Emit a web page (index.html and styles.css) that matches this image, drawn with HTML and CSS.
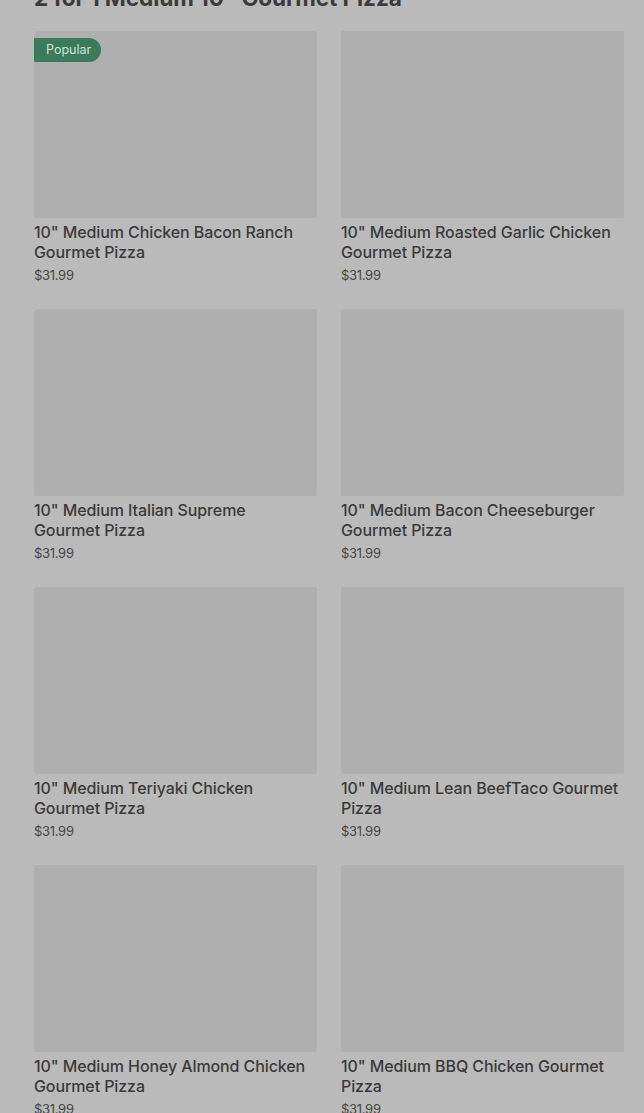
FILE: index.html
```html
<!DOCTYPE html>
<html>
<head>
<meta charset="utf-8">
<link rel="stylesheet" href="styles.css">
</head>
<body>
<div class="page">
  <h2 class="heading">2 for 1 Medium 10" Gourmet Pizza</h2>
  <div class="grid">
    <div class="card">
      <div class="thumb"><span class="badge">Popular</span></div>
      <div class="title">10" Medium Chicken Bacon Ranch Gourmet Pizza</div>
      <div class="price">$31.99</div>
    </div>
    <div class="card">
      <div class="thumb"></div>
      <div class="title">10" Medium Roasted Garlic Chicken Gourmet Pizza</div>
      <div class="price">$31.99</div>
    </div>
    <div class="card">
      <div class="thumb"></div>
      <div class="title">10" Medium Italian Supreme Gourmet Pizza</div>
      <div class="price">$31.99</div>
    </div>
    <div class="card">
      <div class="thumb"></div>
      <div class="title">10" Medium Bacon Cheeseburger Gourmet Pizza</div>
      <div class="price">$31.99</div>
    </div>
    <div class="card">
      <div class="thumb"></div>
      <div class="title">10" Medium Teriyaki Chicken Gourmet Pizza</div>
      <div class="price">$31.99</div>
    </div>
    <div class="card">
      <div class="thumb"></div>
      <div class="title">10" Medium Lean BeefTaco Gourmet Pizza</div>
      <div class="price">$31.99</div>
    </div>
    <div class="card">
      <div class="thumb"></div>
      <div class="title">10" Medium Honey Almond Chicken Gourmet Pizza</div>
      <div class="price">$31.99</div>
    </div>
    <div class="card">
      <div class="thumb"></div>
      <div class="title">10" Medium BBQ Chicken Gourmet Pizza</div>
      <div class="price">$31.99</div>
    </div>
  </div>
</div>
</body>
</html>
```
FILE: styles.css
```css
html, body {
  margin: 0;
  padding: 0;
  background: #bababa;
  overflow: hidden;
}
.page {
  padding: 0 20px 0 34px;
  font-family: Inter, "Open Sans", sans-serif;
  color: #3a3a3a;
}
.heading {
  margin: -16px 0 17px 0;
  height: 30px;
  font-size: 22.6px;
  line-height: 28px;
  font-weight: 700;
  color: #3b3b3b;
  letter-spacing: -0.1px;
  white-space: nowrap;
}
.grid {
  display: grid;
  grid-template-columns: 283px 283px;
  column-gap: 24px;
  row-gap: 25px;
}
.card {
  display: flex;
  flex-direction: column;
}
.thumb {
  position: relative;
  height: 187px;
  background: #afafaf;
  border-radius: 2px;
}
.badge {
  position: absolute;
  left: 0;
  top: 7px;
  height: 24px;
  width: 67px;
  box-sizing: border-box;
  padding-left: 12px;
  background: #3b7a5b;
  color: #cfe3d6;
  font-size: 12.5px;
  line-height: 24px;
  border-radius: 0 12px 12px 0;
}
.title {
  margin-top: 4px;
  max-width: 280px;
  font-size: 16px;
  line-height: 20px;
  font-weight: 500;
  color: #3a3a3a;
  letter-spacing: -0.1px;
}
.price {
  margin-top: 4px;
  font-size: 13px;
  line-height: 18px;
  color: #474747;
  letter-spacing: -0.3px;
}
```
